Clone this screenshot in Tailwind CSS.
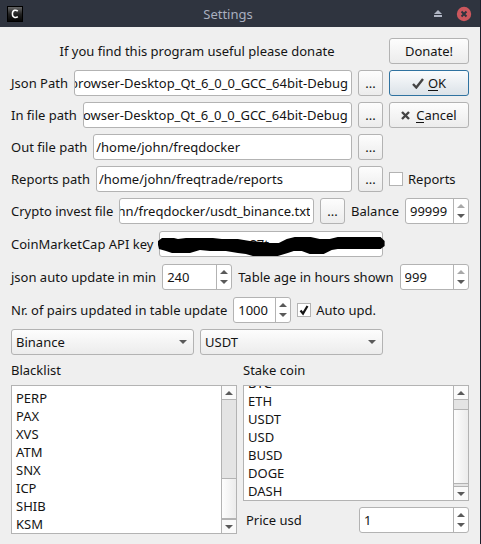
<!DOCTYPE html>
<html lang="en">
<head>
<meta charset="utf-8">
<title>Settings</title>
<script src="https://cdn.jsdelivr.net/npm/@tailwindcss/browser@4"></script>
</head>
<body class="min-h-screen bg-[#efefef] font-['Noto_Sans',sans-serif] text-[13px] leading-[18px] text-[#141414]">
<svg class="hidden">
  <symbol id="up" viewBox="0 0 8 4"><path d="M4 0 8 4H0z" fill="currentColor"/></symbol>
  <symbol id="down" viewBox="0 0 8 4"><path d="M0 0h8L4 4z" fill="currentColor"/></symbol>
</svg>
<div class="flex min-h-screen flex-col border-r border-[#1d202b]">
  <header class="flex h-[27px] items-center bg-[#2f343f] pl-[7px] pr-2 text-[#a9afbf]">
    <svg class="size-4" viewBox="0 0 16 16" aria-hidden="true">
      <defs><linearGradient id="logo" x2="0" y2="1"><stop stop-color="#666"/><stop offset=".5" stop-color="#222"/><stop offset="1" stop-color="#050505"/></linearGradient></defs>
      <rect width="16" height="16" fill="#000"/><rect x="1" y="1" width="14" height="14" fill="url(#logo)"/>
      <path d="M10.8 5.1C9.8 4.2 8.6 4 7.6 4.3 6 4.800 5.400 6.200 5.400 7.800s.7 3.200 2.300 3.600c1.100.3 2.200 0 3.100-.8" fill="none" stroke="#fff" stroke-width="1.500"/>
    </svg>
    <h1 class="flex-1 text-center">Settings</h1>
    <button type="button" aria-label="Roll up" class="flex w-[9px] justify-center"><svg class="h-[7px] w-2 shrink-0" viewBox="0 0 8 7"><path d="M4 0 8 4H0zM0 5h8v2H0z" fill="#b0b5c4"/></svg></button>
    <button type="button" aria-label="Close" class="ml-[14px]"><svg class="size-4" viewBox="0 0 16 16"><circle cx="8" cy="8" r="7.200" fill="#cc575d"/><path d="m5.500 5.500 5 5m0-5-5 5" stroke="#2f343f" stroke-width="2"/></svg></button>
  </header>

  <form class="flex flex-col gap-1.5 px-[11px] pt-[11px] pb-2.5">
    <div class="flex items-center gap-1.5">
      <p class="flex-1 text-center">If you find this program useful please donate</p>
      <button type="button" class="h-[26px] w-20 rounded-[3px] border border-[#b3b3b3] bg-linear-to-b from-[#fdfdfd] to-[#ececec]">Donate!</button>
    </div>
    <div class="flex items-center gap-1.5">
      <label for="json">Json Path</label>
      <input id="json" data-end value="/home/john/build-browser-Desktop_Qt_6_0_0_GCC_64bit-Debug" class="h-[26px] min-w-0 flex-1 rounded-[3px] border border-[#b3b3b3] bg-white pr-[3px]">
      <button type="button" aria-label="Browse Json Path" class="h-[26px] w-[25px] rounded-[3px] border border-[#b3b3b3] bg-linear-to-b from-[#fdfdfd] to-[#ececec]">...</button>
      <button class="flex h-[26px] w-20 items-center justify-center gap-1 rounded-[3px] border border-[#2f72a0] bg-linear-to-b from-[#fbfcfd] to-[#dbe2e8]"><svg class="h-[11px] w-3" viewBox="0 0 12 11"><path d="m1 6 3.300 3.500L11 1" fill="none" stroke="#444" stroke-width="2.400"/></svg><span><span class="inline-block border-b border-[#141414] leading-[14px]">O</span>K</span></button>
    </div>
    <div class="flex items-center gap-1.5">
      <label for="infile">In file path</label>
      <input id="infile" data-end value="/home/john/build-browser-Desktop_Qt_6_0_0_GCC_64bit-Debug" class="h-[26px] min-w-0 flex-1 rounded-[3px] border border-[#b3b3b3] bg-white pr-[3px]">
      <button type="button" aria-label="Browse In file path" class="h-[26px] w-[25px] rounded-[3px] border border-[#b3b3b3] bg-linear-to-b from-[#fdfdfd] to-[#ececec]">...</button>
      <button type="button" class="flex h-[26px] w-20 items-center justify-center gap-1.5 rounded-[3px] border border-[#b3b3b3] bg-linear-to-b from-[#fdfdfd] to-[#ececec]"><svg class="size-[9px]" viewBox="0 0 9 9"><path d="m1 1 7 7m0-7-7 7" stroke="#444" stroke-width="2.400"/></svg><span><span class="inline-block border-b border-[#141414] leading-[14px]">C</span>ancel</span></button>
    </div>
    <div class="flex items-center gap-1.5">
      <label for="outfile">Out file path</label>
      <input id="outfile" value="/home/john/freqdocker" class="h-[26px] min-w-0 flex-1 rounded-[3px] border border-[#b3b3b3] bg-white px-0.5">
      <button type="button" aria-label="Browse Out file path" class="h-[26px] w-[25px] rounded-[3px] border border-[#b3b3b3] bg-linear-to-b from-[#fdfdfd] to-[#ececec]">...</button>
      <div class="w-20"></div>
    </div>
    <div class="flex items-center gap-1.5">
      <label for="reportspath">Reports path</label>
      <input id="reportspath" value="/home/john/freqtrade/reports" class="h-[26px] min-w-0 flex-1 rounded-[3px] border border-[#b3b3b3] bg-white px-0.5">
      <button type="button" aria-label="Browse Reports path" class="h-[26px] w-[25px] rounded-[3px] border border-[#b3b3b3] bg-linear-to-b from-[#fdfdfd] to-[#ececec]">...</button>
      <div class="flex w-20 items-center gap-[5px]">
        <input id="reports" type="checkbox" class="size-3.5 appearance-none border border-[#b3b3b3] bg-white">
        <label for="reports">Reports</label>
      </div>
    </div>
    <div class="mb-px flex items-center gap-1.5">
      <label for="crypto">Crypto invest file</label>
      <input id="crypto" data-end value="/home/john/freqdocker/usdt_binance.txt" class="h-[26px] min-w-0 flex-1 rounded-[3px] border border-[#b3b3b3] bg-white pr-[3px]">
      <button type="button" aria-label="Browse Crypto invest file" class="h-[26px] w-[25px] rounded-[3px] border border-[#b3b3b3] bg-linear-to-b from-[#fdfdfd] to-[#ececec]">...</button>
      <label for="balance">Balance</label>
      <div class="flex h-[26px] w-16 overflow-hidden rounded-[3px] border border-[#b3b3b3] bg-white">
        <input id="balance" type="number" value="99999" class="min-w-0 flex-1 pl-1 [appearance:textfield] [&::-webkit-inner-spin-button]:appearance-none">
        <div class="flex w-[15px] flex-col items-center justify-center gap-1.5 border-l border-[#b3b3b3] text-[#5a5a5a]">
          <button type="button" aria-label="Increase" disabled class="text-[#a8a8a8]"><svg class="h-1 w-2"><use href="#up"/></svg></button>
          <button type="button" aria-label="Decrease"><svg class="h-1 w-2"><use href="#down"/></svg></button>
        </div>
      </div>
    </div>
    <div class="mb-px flex items-center gap-1.5">
      <label for="apikey">CoinMarketCap API key</label>
      <div class="relative min-w-0 flex-1">
        <input id="apikey" value="xxxxxxxxxx12 87t" class="block h-[26px] w-full rounded-[3px] border border-[#b3b3b3] bg-white px-0.5">
        <svg class="absolute -left-px top-0 h-[26px] w-[calc(100%+3px)]" viewBox="0 0 227 26" preserveAspectRatio="none" aria-hidden="true"><path d="M4 7H16L20 8 28 7H55L64 8H80L92 10 104 11 112 12H121L129 8 137 6H153L162 8H172L180 6H223L227 10V15L223 18H180L174 19 166 23H152L144 20H136L130 22 120 25H95L88 23 80 22 68 20H52L42 19 32 22H14L8 20 1 18 0 14V10Z"/></svg>
      </div>
      <div class="w-20"></div>
    </div>
    <div class="mb-px flex items-center gap-1.5">
      <label for="jsonmin">json auto update in min</label>
      <div class="flex h-[26px] w-[70px] overflow-hidden rounded-[3px] border border-[#b3b3b3] bg-white">
        <input id="jsonmin" type="number" value="240" class="min-w-0 flex-1 pl-1 [appearance:textfield] [&::-webkit-inner-spin-button]:appearance-none">
        <div class="flex w-[15px] flex-col items-center justify-center gap-1.5 border-l border-[#b3b3b3] text-[#5a5a5a]">
          <button type="button" aria-label="Increase"><svg class="h-1 w-2"><use href="#up"/></svg></button>
          <button type="button" aria-label="Decrease"><svg class="h-1 w-2"><use href="#down"/></svg></button>
        </div>
      </div>
      <label for="age">Table age in hours shown</label>
      <div class="flex h-[26px] min-w-0 flex-1 overflow-hidden rounded-[3px] border border-[#b3b3b3] bg-white">
        <input id="age" type="number" value="999" class="min-w-0 flex-1 pl-1 [appearance:textfield] [&::-webkit-inner-spin-button]:appearance-none">
        <div class="flex w-[15px] flex-col items-center justify-center gap-1.5 border-l border-[#b3b3b3] text-[#5a5a5a]">
          <button type="button" aria-label="Increase" disabled class="text-[#a8a8a8]"><svg class="h-1 w-2"><use href="#up"/></svg></button>
          <button type="button" aria-label="Decrease"><svg class="h-1 w-2"><use href="#down"/></svg></button>
        </div>
      </div>
    </div>
    <div class="flex items-center gap-1.5">
      <label for="pairs">Nr. of pairs updated in table update</label>
      <div class="flex h-[26px] w-[58px] overflow-hidden rounded-[3px] border border-[#b3b3b3] bg-white">
        <input id="pairs" type="number" value="1000" class="min-w-0 flex-1 pl-1 [appearance:textfield] [&::-webkit-inner-spin-button]:appearance-none">
        <div class="flex w-[15px] flex-col items-center justify-center gap-1.5 border-l border-[#b3b3b3] text-[#5a5a5a]">
          <button type="button" aria-label="Increase"><svg class="h-1 w-2"><use href="#up"/></svg></button>
          <button type="button" aria-label="Decrease"><svg class="h-1 w-2"><use href="#down"/></svg></button>
        </div>
      </div>
      <div class="flex items-center gap-[5px]">
        <span class="relative size-3.5">
          <input id="auto" type="checkbox" checked class="peer block size-3.5 appearance-none border border-[#b3b3b3] bg-white">
          <svg class="pointer-events-none invisible absolute inset-0 size-3.5 peer-checked:visible" viewBox="0 0 14 14"><path d="M3.500 7.500 6 10.500 10.500 3" fill="none" stroke="#141414" stroke-width="2.200"/></svg>
        </span>
        <label for="auto">Auto upd.</label>
      </div>
    </div>
    <div class="flex gap-1.5">
      <div class="relative flex-1">
        <select aria-label="Exchange" class="block h-[26px] w-full appearance-none rounded-[3px] border border-[#b3b3b3] bg-linear-to-b from-[#fdfdfd] to-[#ececec] px-1"><option>Binance</option></select>
        <svg class="pointer-events-none absolute right-[7px] top-[11px] h-1 w-2 text-[#5a5a5a]"><use href="#down"/></svg>
      </div>
      <div class="relative flex-1">
        <select aria-label="Currency" class="block h-[26px] w-full appearance-none rounded-[3px] border border-[#b3b3b3] bg-linear-to-b from-[#fdfdfd] to-[#ececec] px-1"><option>USDT</option></select>
        <svg class="pointer-events-none absolute right-[7px] top-[11px] h-1 w-2 text-[#5a5a5a]"><use href="#down"/></svg>
      </div>
      <div class="w-20"></div>
    </div>
    <div class="grid grid-cols-2 gap-1.5">
      <section class="flex flex-col gap-1.5">
        <h2 id="bl">Blacklist</h2>
        <div class="flex h-[149px] border border-[#b3b3b3] bg-white">
          <ul role="listbox" aria-labelledby="bl" class="flex flex-1 flex-col justify-end overflow-hidden pl-1">
            <li role="option">PERP</li><li role="option">PAX</li><li role="option">XVS</li><li role="option">ATM</li><li role="option">SNX</li><li role="option">ICP</li><li role="option">SHIB</li><li role="option">KSM</li>
          </ul>
          <div class="flex w-[15px] flex-col border-l border-[#b3b3b3] bg-[#e4e4e4] text-[#5a5a5a]">
            <button type="button" aria-label="Scroll up" class="flex h-3.5 items-center justify-center border-b border-[#b3b3b3] bg-[#fafafa]"><svg class="h-1 w-2"><use href="#up"/></svg></button>
            <div class="flex-1"></div>
            <div class="h-[41px] border-y border-[#b3b3b3] bg-linear-to-r from-[#fdfdfd] to-[#ececec]"></div>
            <button type="button" aria-label="Scroll down" class="flex h-3.5 items-center justify-center border-t border-[#b3b3b3] bg-[#fafafa]"><svg class="h-1 w-2"><use href="#down"/></svg></button>
          </div>
        </div>
      </section>
      <section class="flex flex-col gap-1.5">
        <h2 id="sc">Stake coin</h2>
        <div class="flex h-[116px] border border-[#b3b3b3] bg-white">
          <ul role="listbox" aria-labelledby="sc" class="flex flex-1 flex-col justify-end overflow-hidden pl-1">
            <li role="option">BTC</li><li role="option">ETH</li><li role="option">USDT</li><li role="option">USD</li><li role="option">BUSD</li><li role="option">DOGE</li><li role="option">DASH</li>
          </ul>
          <div class="flex w-[15px] flex-col border-l border-[#b3b3b3] bg-[#e4e4e4] text-[#5a5a5a]">
            <button type="button" aria-label="Scroll up" class="flex h-3.5 items-center justify-center border-b border-[#b3b3b3] bg-[#fafafa]"><svg class="h-1 w-2"><use href="#up"/></svg></button>
            <div class="flex-1"></div>
            <div class="mb-0.5 h-[75px] border-y border-[#b3b3b3] bg-linear-to-r from-[#fdfdfd] to-[#ececec]"></div>
            <button type="button" aria-label="Scroll down" class="flex h-3.5 items-center justify-center border-t border-[#b3b3b3] bg-[#fafafa]"><svg class="h-1 w-2"><use href="#down"/></svg></button>
          </div>
        </div>
        <div class="flex items-center justify-between pl-[3px]">
          <label for="price">Price usd</label>
          <div class="flex h-[26px] w-[110px] overflow-hidden rounded-[3px] border border-[#b3b3b3] bg-white">
            <input id="price" type="number" value="1" class="min-w-0 flex-1 pl-1 [appearance:textfield] [&::-webkit-inner-spin-button]:appearance-none">
            <div class="flex w-[15px] flex-col items-center justify-center gap-1.5 border-l border-[#b3b3b3] text-[#5a5a5a]">
              <button type="button" aria-label="Increase"><svg class="h-1 w-2"><use href="#up"/></svg></button>
              <button type="button" aria-label="Decrease"><svg class="h-1 w-2"><use href="#down"/></svg></button>
            </div>
          </div>
        </div>
      </section>
    </div>
  </form>
</div>
<script>
  // Show the end of long paths, where the file name is
  const showEnds = () => document.querySelectorAll('[data-end]').forEach(el => { el.scrollLeft = 9999; });
  showEnds();
  addEventListener('load', () => { showEnds(); requestAnimationFrame(showEnds); });
</script>
</body>
</html>
